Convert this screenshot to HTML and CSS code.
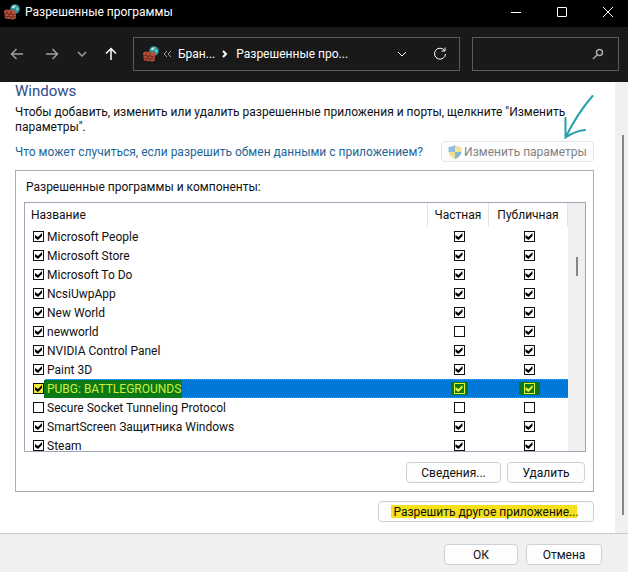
FILE: index.html
```html
<!DOCTYPE html>
<html lang="ru">
<head>
<meta charset="utf-8">
<meta name="viewport" content="width=device-width, initial-scale=1">
<title>Разрешенные программы</title>
<link rel="stylesheet" href="styles.css">
</head>
<body>
<svg width="0" height="0" class="defs" aria-hidden="true">
  <symbol id="firewall" viewBox="0 0 16 16">
    <circle cx="11" cy="5" r="4.8" fill="#2f8f98"/>
    <path d="M7.5 3.5Q9 .8 12 1.2Q11.500 3.500 9.500 4.500Z" fill="#b9ecdf"/>
    <path d="M12 3l3 1-1 3-2-1z" fill="#67c4b8"/>
    <path d="M0 7l2-1.500 10 1v7.500l-2 1.500-9-1z" fill="#b8503c"/>
    <path d="M0 9.500l10.500 1L12 9.500M.5 12.200l10 1L12 12M3 6.500v3M7 7v3M5 10v3M9 10.500v2.500M3 12.500v2.500M7 13v2.500" stroke="#5e241d" stroke-width=".8" fill="none"/>
  </symbol>
</svg>
<div class="window">
  <header class="titlebar">
    <svg class="app-icon" aria-hidden="true"><use href="#firewall"/></svg>
    <h1>Разрешенные программы</h1>
    <div class="window-buttons">
      <button type="button" aria-label="Свернуть"><svg width="12" height="12" viewBox="0 0 12 12"><path d="M1 6.500h10"/></svg></button>
      <button type="button" aria-label="Развернуть"><svg width="12" height="12" viewBox="0 0 12 12"><rect x="1.500" y="1.500" width="9" height="9" rx=".5"/></svg></button>
      <button type="button" aria-label="Закрыть"><svg width="12" height="12" viewBox="0 0 12 12"><path d="M1 1l10 10M11 1L1 11"/></svg></button>
    </div>
  </header>
  <nav class="navbar" aria-label="Навигация">
    <div class="history">
      <button type="button" class="dim" aria-label="Назад"><svg width="14" height="14" viewBox="0 0 14 14"><path d="M13 7H1.500M6.500 2l-5 5 5 5"/></svg></button>
      <button type="button" class="dim" aria-label="Вперед"><svg width="14" height="14" viewBox="0 0 14 14"><path d="M1 7h11.500M7.500 2l5 5-5 5"/></svg></button>
      <button type="button" class="dim small" aria-label="Последние"><svg width="10" height="10" viewBox="0 0 10 10"><path d="M1 3l4 4 4-4"/></svg></button>
      <button type="button" aria-label="Вверх"><svg width="14" height="14" viewBox="0 0 14 14"><path d="M7 13V1.500M2 6.500l5-5 5 5"/></svg></button>
    </div>
    <div class="address">
      <svg class="app-icon" aria-hidden="true"><use href="#firewall"/></svg>
      <svg class="dim" width="9" height="8" viewBox="0 0 9 8"><path d="M4 1L1 4l3 3M8 1L5 4l3 3"/></svg>
      <a href="#">Бран...</a>
      <svg class="crumb" width="6" height="8" viewBox="0 0 6 8"><path d="M1 1l3 3-3 3"/></svg>
      <a href="#">Разрешенные про...</a>
      <button type="button" class="drop" aria-label="Предыдущие расположения"><svg width="10" height="10" viewBox="0 0 10 10"><path d="M1 3l4 4 4-4"/></svg></button>
      <button type="button" aria-label="Обновить"><svg width="14" height="14" viewBox="0 0 14 14"><path d="M11.500 3.500A5.500 5.500 0 1 0 12.500 7M12 .5v3.500H8.500"/></svg></button>
    </div>
    <label class="search">
      <input type="text" aria-label="Поиск">
      <svg width="12" height="12" viewBox="0 0 12 12"><circle cx="7.500" cy="4.500" r="3"/><path d="M5.300 6.700L1 11"/></svg>
    </label>
  </nav>
  <div class="viewport">
    <main>
      <h2>Windows</h2>
      <p>Чтобы добавить, изменить или удалить разрешенные приложения и порты, щелкните "Изменить параметры".</p>
      <div class="change">
        <a href="#">Что может случиться, если разрешить обмен данными с приложением?</a>
        <button type="button" class="btn shielded" disabled>
          <svg width="14" height="14" viewBox="0 0 14 14" aria-hidden="true"><path d="M7 0Q4 2 .5 2v5H7z" fill="#8fc0dc"/><path d="M7 0q3 2 6.500 2v5H7z" fill="#f0e29a"/><path d="M.5 7Q1 11.500 7 14V7z" fill="#eedf92"/><path d="M13.500 7Q13 11.500 7 14V7z" fill="#86b6d8"/></svg>
          Изменить параметры
        </button>
        <svg class="arrow" width="30" height="46" viewBox="0 0 30 46" aria-hidden="true"><path d="M28.500 2Q13 20 1.500 43.500M1.500 24v19.500Q11 37 21 36"/></svg>
      </div>
      <section class="group">
        <h3>Разрешенные программы и компоненты:</h3>
        <div class="list">
          <table>
            <thead><tr><th>Название</th><th class="private">Частная</th><th class="public">Публичная</th></tr></thead>
            <tbody>
              <tr><td><label><input type="checkbox" checked><span>Microsoft People</span></label></td><td><input type="checkbox" aria-label="Частная" checked></td><td><input type="checkbox" aria-label="Публичная" checked></td></tr>
              <tr><td><label><input type="checkbox" checked><span>Microsoft Store</span></label></td><td><input type="checkbox" aria-label="Частная" checked></td><td><input type="checkbox" aria-label="Публичная" checked></td></tr>
              <tr><td><label><input type="checkbox" checked><span>Microsoft To Do</span></label></td><td><input type="checkbox" aria-label="Частная" checked></td><td><input type="checkbox" aria-label="Публичная" checked></td></tr>
              <tr><td><label><input type="checkbox" checked><span>NcsiUwpApp</span></label></td><td><input type="checkbox" aria-label="Частная" checked></td><td><input type="checkbox" aria-label="Публичная" checked></td></tr>
              <tr><td><label><input type="checkbox" checked><span>New World</span></label></td><td><input type="checkbox" aria-label="Частная" checked></td><td><input type="checkbox" aria-label="Публичная" checked></td></tr>
              <tr><td><label><input type="checkbox" checked><span>newworld</span></label></td><td><input type="checkbox" aria-label="Частная"></td><td><input type="checkbox" aria-label="Публичная" checked></td></tr>
              <tr><td><label><input type="checkbox" checked><span>NVIDIA Control Panel</span></label></td><td><input type="checkbox" aria-label="Частная" checked></td><td><input type="checkbox" aria-label="Публичная" checked></td></tr>
              <tr><td><label><input type="checkbox" checked><span>Paint 3D</span></label></td><td><input type="checkbox" aria-label="Частная" checked></td><td><input type="checkbox" aria-label="Публичная" checked></td></tr>
              <tr class="selected"><td><label><input type="checkbox" checked><span>PUBG: BATTLEGROUNDS</span></label></td><td><span class="mark"><input type="checkbox" aria-label="Частная" checked></span></td><td><span class="mark wide"><input type="checkbox" aria-label="Публичная" checked></span></td></tr>
              <tr><td><label><input type="checkbox"><span>Secure Socket Tunneling Protocol</span></label></td><td><input type="checkbox" aria-label="Частная"></td><td><input type="checkbox" aria-label="Публичная"></td></tr>
              <tr><td><label><input type="checkbox" checked><span>SmartScreen Защитника Windows</span></label></td><td><input type="checkbox" aria-label="Частная" checked></td><td><input type="checkbox" aria-label="Публичная" checked></td></tr>
              <tr><td><label><input type="checkbox" checked><span>Steam</span></label></td><td><input type="checkbox" aria-label="Частная" checked></td><td><input type="checkbox" aria-label="Публичная" checked></td></tr>
            </tbody>
          </table>
          <div class="list-scroll"><div class="thumb"></div></div>
        </div>
        <div class="actions">
          <button type="button" class="btn details">Сведения...</button>
          <button type="button" class="btn remove">Удалить</button>
        </div>
      </section>
      <div class="another"><button type="button" class="btn allow"><mark>Разрешить другое приложение...</mark></button></div>
    </main>
    <div class="page-scroll"><div class="thumb"></div></div>
  </div>
  <footer>
    <button type="button" class="btn ok">ОК</button>
    <button type="button" class="btn cancel">Отмена</button>
  </footer>
</div>
</body>
</html>
```

FILE: styles.css
```css
* { box-sizing: border-box; }
body {
  margin: 0;
  font: 12px/16px Roboto, "Noto Sans", sans-serif;
  color: #111;
  background: #fff;
}
h1, h2, h3, p { margin: 0; font-size: 12px; font-weight: 400; }
button, input { font: inherit; color: inherit; margin: 0; }
a { color: inherit; text-decoration: none; }
svg { flex: none; fill: none; stroke: currentColor; }
.defs { position: absolute; }
.window { min-height: 100vh; display: flex; flex-direction: column; }
.app-icon { width: 16px; height: 16px; stroke: none; }

.titlebar {
  height: 27px;
  padding: 0 0 4px 4px;
  display: flex;
  align-items: center;
  gap: 5px;
  background: #000;
  color: #fff;
}
.window-buttons { margin-left: auto; display: flex; }
.window-buttons button, .history button, .address button {
  display: flex;
  align-items: center;
  justify-content: center;
  padding: 0;
  border: 0;
  background: none;
}
.window-buttons button { width: 46px; height: 22px; }
.window-buttons button:last-child { margin-right: -3px; }

.navbar {
  height: 55px;
  padding: 0 9px 2px;
  display: flex;
  align-items: center;
  background: #191919;
  color: #fff;
}
.dim { color: #a0a0a0; }
.history { display: flex; padding-right: 14px; }
.history svg { stroke-width: 1.5; }
.history button { width: 16px; height: 32px; margin-right: 19px; }
.history button:nth-child(2) { margin-right: 16px; }
.history button.small { width: 12px; margin-right: 15px; }
.history button:last-child { margin-right: 0; }
.address, .search { height: 34px; border: 1px solid #5a5a5a; display: flex; align-items: center; }
.address { flex: 303; padding: 0 12px 0 9px; gap: 4px; }
.address a { margin-left: 2px; }
.crumb { margin: 0 2px 0 3px; stroke-width: 2; }
.address .drop { margin-left: auto; margin-right: 17px; width: 20px; }
.search { flex: 131; min-width: 0; margin-left: 12px; padding-right: 14px; color: #aaa; }
.search input { flex: 1; min-width: 0; height: 30px; border: 0; outline: 0; background: none; }
.search svg { stroke-width: 1.5; }

.viewport { flex: 1; display: flex; }
main { flex: 1; min-width: 0; padding: 0 21px 10px 15px; }
h2 { font-size: 15px; line-height: 18px; color: #2b4a8b; }
main > p { margin-top: 5px; line-height: 15px; }
.change { position: relative; display: flex; align-items: center; justify-content: space-between; margin-top: 6px; }
.change a { color: #1f6698; white-space: nowrap; }
.arrow { position: absolute; right: 0; bottom: 22px; stroke: #2a9fae; stroke-width: 2; stroke-linecap: round; }
.btn {
  height: 21px;
  padding: 0;
  border: 1px solid #d0d0d0;
  border-radius: 4px;
  background: #fdfdfd;
  white-space: nowrap;
  line-height: 16px;
}
.shielded { width: 153px; display: flex; align-items: center; justify-content: center; gap: 2px; color: #838383; border-color: #e6e6e6; }
.shielded svg { stroke: none; }

.group { margin-top: 8px; padding: 8px 7px 8px 8px; border: 1px solid #a9adbb; }
h3 { padding: 0 2px 7px; }
.list { height: 250px; display: flex; border: 1px solid #a0a4b4; overflow: hidden; }
table { flex: 1; border-collapse: collapse; table-layout: fixed; align-self: flex-start; }
th { height: 24px; padding: 0; font-weight: 400; border-right: 1px solid #e2e2e2; }
th:first-child { text-align: left; padding-left: 6px; }
.private { width: 61px; }
.public { width: 79px; }
td { height: 19px; padding: 0 0 0 2px; text-align: center; }
td:first-child { padding-left: 8px; text-align: left; }
td label { display: flex; align-items: center; height: 17px; }
td label span { padding: 0 1px 0 3px; line-height: 12px; }
input[type="checkbox"] {
  appearance: none;
  display: block;
  width: 11px;
  height: 11px;
  margin: 0 auto;
  border: 1px solid #111;
  background: #fff;
}
label input[type="checkbox"] { margin: 0; }
input[type="checkbox"]:checked::before {
  content: "";
  display: block;
  width: 9px;
  height: 9px;
  background: #000;
  clip-path: polygon(1px 3px, 4px 5px, 8px 1px, 8px 4px, 4px 8px, 1px 6px);
}
.selected {
  background:
    repeating-linear-gradient(90deg, #b98a59 0 1px, transparent 1px 2px) 20px 0 / 100% 1px no-repeat,
    repeating-linear-gradient(90deg, #b98a59 0 1px, transparent 1px 2px) 20px 100% / 100% 1px no-repeat,
    linear-gradient(#0078d7, #0078d7) 20px 0 no-repeat;
}
.selected label span { padding-block: 3px; background: #0a7a18; color: #d4ee35; }
.selected label input[type="checkbox"] { background: #f4ec32; }
.mark { display: block; width: 17px; padding: 1px 0; margin: 0 auto; background: #087818; }
.mark.wide { width: 21px; }
.mark input[type="checkbox"] { background: transparent; border-color: #e6f33a; }
.mark input[type="checkbox"]:checked::before { background: #e6f33a; }
.list-scroll { width: 17px; background: #f0f0f0; padding-top: 54px; }
.list-scroll .thumb { width: 2px; height: 19px; margin: 0 auto; background: #858585; }
.actions { display: flex; justify-content: flex-end; gap: 6px; margin-top: 10px; padding-right: 1px; }
.details { width: 95px; }
.remove { width: 78px; }
.another { display: flex; justify-content: flex-end; margin-top: 9px; }
.allow { width: 216px; }
mark { background: linear-gradient(#f5e11a, #f5e11a) 0 50% / 98% 13px no-repeat; color: inherit; padding: 0 2px; }
.page-scroll { width: 13px; background: #f0f0f0; padding: 53px 4px 18px 7px; display: flex; }
.page-scroll .thumb { width: 2px; background: #858585; }

footer {
  height: 39px;
  padding: 10px 26px 0;
  display: flex;
  justify-content: flex-end;
  gap: 8px;
  border-top: 1px solid #c9c9c9;
  background: #f0f0f0;
}
.ok { width: 74px; }
.cancel { width: 76px; }
```
